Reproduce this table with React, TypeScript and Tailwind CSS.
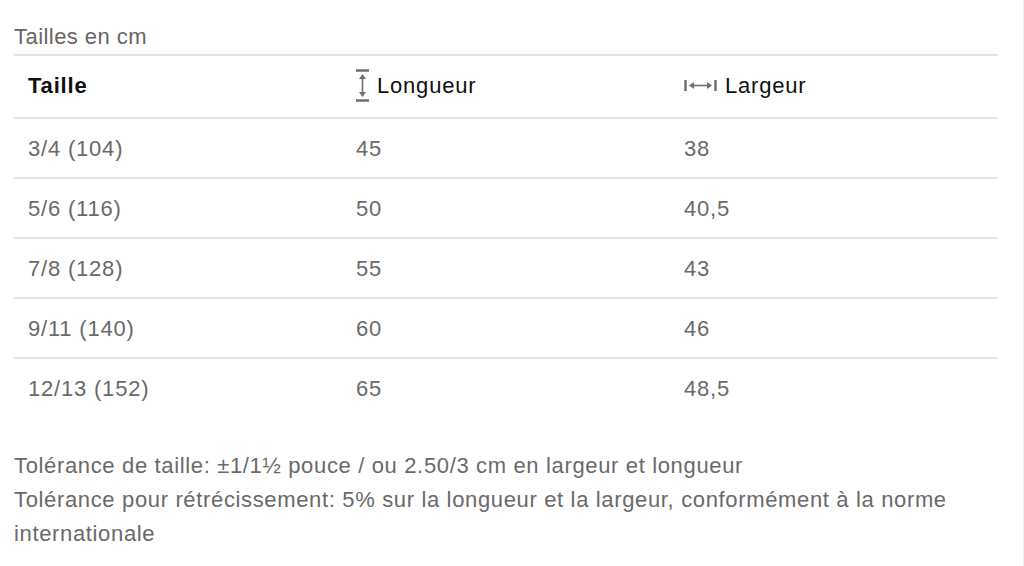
const rows = [
  { size: "3/4 (104)", length: "45", width: "38" },
  { size: "5/6 (116)", length: "50", width: "40,5" },
  { size: "7/8 (128)", length: "55", width: "43" },
  { size: "9/11 (140)", length: "60", width: "46" },
  { size: "12/13 (152)", length: "65", width: "48,5" },
];

function LengthIcon() {
  return (
    <svg width="13" height="33" viewBox="0 0 13 33" className="shrink-0">
      <g stroke="#707070" fill="none">
        <line x1="0" y1="1.5" x2="13" y2="1.5" strokeWidth="2.5" />
        <line x1="0" y1="31.5" x2="13" y2="31.5" strokeWidth="2.5" />
        <line x1="6.5" y1="6" x2="6.5" y2="27" strokeWidth="1.6" />
      </g>
      <path d="M6.5 5 L10 10 L3 10 Z" fill="#707070" />
      <path d="M6.5 28 L10 23 L3 23 Z" fill="#707070" />
    </svg>
  );
}

function WidthIcon() {
  return (
    <svg width="33" height="11" viewBox="0 0 33 11" className="shrink-0">
      <g stroke="#707070" fill="none">
        <line x1="1.5" y1="0" x2="1.5" y2="11" strokeWidth="2.5" />
        <line x1="31.5" y1="0" x2="31.5" y2="11" strokeWidth="2.5" />
        <line x1="6" y1="5.5" x2="27" y2="5.5" strokeWidth="1.6" />
      </g>
      <path d="M5 5.5 L10 2 L10 9 Z" fill="#707070" />
      <path d="M28 5.5 L23 2 L23 9 Z" fill="#707070" />
    </svg>
  );
}

export default function App() {
  return (
    <div className="h-[566px] w-[1024px] overflow-hidden border-r border-[#f0f0f0] bg-white font-['Liberation_Sans',Arial,sans-serif]">
      <div className="pl-[14px] pr-[25px] pt-[24px]">
        <h2 className="text-[22px] leading-[26px] tracking-[0.45px] text-[#666]">Tailles en cm</h2>
        <table className="mt-[4px] w-full border-collapse text-[22px] tracking-[0.8px]">
          <thead>
            <tr className="h-[63px] border-y-2 border-[#e3e3e3]">
              <th className="w-[328px] px-[14px] pb-[2px] text-left font-bold text-[#111]">Taille</th>
              <th className="w-[328px] px-[14px] pb-[2px] text-left font-normal text-[#111]">
                <span className="flex items-center gap-[8px]">
                  <LengthIcon />
                  Longueur
                </span>
              </th>
              <th className="px-[14px] pb-[2px] text-left font-normal text-[#111]">
                <span className="flex items-center gap-[8px]">
                  <WidthIcon />
                  Largeur
                </span>
              </th>
            </tr>
          </thead>
          <tbody>
            {rows.map((r, i) => (
              <tr key={r.size} className={i < rows.length - 1 ? "h-[60px] border-b-2 border-[#e3e3e3]" : "h-[60px]"}>
                <td className="px-[14px] text-[#6a6a6a]">{r.size}</td>
                <td className="px-[14px] text-[#6a6a6a]">{r.length}</td>
                <td className="px-[14px] text-[#6a6a6a]">{r.width}</td>
              </tr>
            ))}
          </tbody>
        </table>
        <div className="mt-[31px] text-[22px] leading-[34px] tracking-[0.65px] text-[#6a6a6a]">
          <p>Tolérance de taille: ±1/1½ pouce / ou 2.50/3 cm en largeur et longueur</p>
          <p>
            Tolérance pour rétrécissement: 5% sur la longueur et la largeur, conformément à la norme
            internationale
          </p>
        </div>
      </div>
    </div>
  );
}
